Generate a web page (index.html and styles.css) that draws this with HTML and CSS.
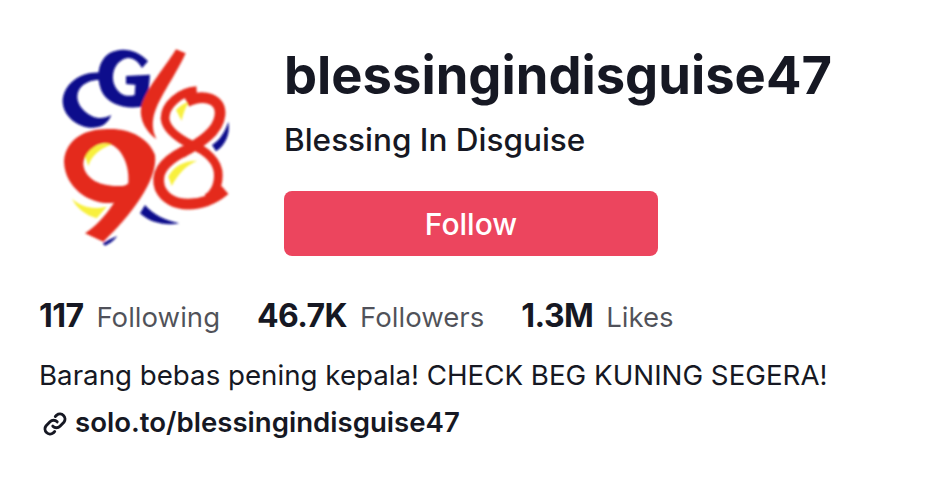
FILE: index.html
```html
<!DOCTYPE html>
<html lang="en">
<head>
  <meta charset="UTF-8" />
  <title>blessingindisguise47</title>
  <link rel="stylesheet" href="styles.css">
</head>
<body>
  <div class="profile">
    <div class="header">
      <svg class="avatar" viewBox="0 0 660 690" aria-label="CG 98 logo">
        <defs><filter id="soft"><feGaussianBlur stdDeviation="2.8"/></filter></defs>
        <g filter="url(#soft)">
          <path fill="#f8f03c" d="M132,370 C160,345 190,335 225,340 C185,352 155,375 145,408 Z"/>
          <path fill="#f8f03c" d="M95,505 C120,530 155,540 200,530 L170,565 C135,555 110,535 95,505 Z"/>
          <path fill="#f8f03c" d="M385,440 C400,410 430,392 472,392 C440,405 415,430 395,468 Z"/>
          <path fill="#f8f03c" d="M408,240 C420,228 430,220 447,216 C435,235 430,250 425,272 Z"/>
          <path fill="#0a0a8c" d="M565,275 C572,310 557,345 528,364 L516,345 C540,330 555,305 565,275 Z"/>
          <path fill="#0a0a8c" d="M315,525 C340,555 375,570 418,580 C375,588 330,578 300,550 Z"/>
          <path fill="#0a0a8c" d="M188,640 C200,632 215,625 232,618 C222,632 208,642 195,647 Z"/>
          <path fill="#0a0a8c" d="M185,128 C120,122 68,165 68,215 C70,265 125,300 170,292 C190,289 205,277 214,255 C195,265 175,268 155,258 C120,240 100,205 120,175 C135,155 160,148 185,150 Z"/>
          <path fill="#0a0a8c" d="M324,94 C295,60 245,48 208,70 C170,95 168,150 188,190 C210,228 268,242 322,226 L330,134 L258,138 L258,162 L286,164 L284,195 C252,205 228,185 220,155 C214,120 232,90 262,84 C280,82 295,95 306,114 Z"/>
          <path fill="#e42b1e" d="M408,58 L437,70 C400,150 350,210 340,265 C336,290 340,310 350,328 C320,308 298,270 303,235 C310,185 370,120 408,58 Z"/>
          <g fill="none" stroke="#e42b1e" stroke-linecap="butt">
            <path stroke-width="26" d="M470,182 C420,185 375,225 375,265 C378,300 415,325 455,345 C500,362 535,395 535,435 C535,470 520,495 500,505"/>
            <path stroke-width="32" d="M440,215 C490,190 545,205 540,255 C535,305 480,340 425,368"/>
            <path stroke-width="32" d="M432,364 C370,395 345,430 360,475 C390,540 490,535 555,480"/>
          </g>
          <path fill="#e42b1e" fill-rule="evenodd" d="M72,395 C75,340 120,300 190,298 C260,290 325,320 345,375 C355,450 270,560 190,635 L135,610 C165,590 195,560 222,518 C160,528 75,480 72,395 Z M130,405 C130,370 165,338 200,340 C240,345 270,400 265,460 C258,468 250,468 240,468 C170,470 135,440 130,405 Z"/>
        </g>
      </svg>
      <div class="info">
        <h1 class="username">blessingindisguise47</h1>
        <h2 class="nickname">Blessing In Disguise</h2>
        <button class="follow">Follow</button>
      </div>
    </div>
    <div class="stats">
      <div class="stat"><strong>117</strong><span>Following</span></div>
      <div class="stat"><strong>46.7K</strong><span>Followers</span></div>
      <div class="stat"><strong>1.3M</strong><span>Likes</span></div>
    </div>
    <p class="bio">Barang bebas pening kepala! CHECK BEG KUNING SEGERA!</p>
    <a class="link" href="#">
      <svg class="link-icon" viewBox="0 0 24 24" fill="none" stroke="currentColor" stroke-width="2.7" stroke-linecap="round" stroke-linejoin="round">
        <path d="M10 14a4.6 4.6 0 0 0 6.6 0l3.6-3.6a4.7 4.7 0 0 0-6.6-6.6l-1.3 1.3"/>
        <path d="M14 10a4.6 4.6 0 0 0-6.6 0l-3.6 3.6a4.7 4.7 0 0 0 6.6 6.6l1.3-1.3"/>
      </svg>
      solo.to/blessingindisguise47
    </a>
  </div>
</body>
</html>
```

FILE: styles.css
```css
body {
  margin: 0;
  background: #fff;
  color: #161823;
  font-family: Inter, 'Liberation Sans', sans-serif;
}

.profile {
  padding: 40px 0 0 39px;
}

.header {
  display: flex;
  align-items: flex-start;
}

.avatar {
  width: 220px;
  height: 230px;
  margin: -10px 24px 0 1px;
  flex-shrink: 0;
}

.info {
  display: flex;
  flex-direction: column;
  align-items: flex-start;
}

.username {
  margin: 0;
  font-size: 52.5px;
  line-height: 70px;
  font-weight: 700;
}

.nickname {
  margin: 11px 0 0;
  font-size: 31.5px;
  line-height: 38px;
  font-weight: 500;
}

.follow {
  width: 374px;
  height: 65px;
  margin-top: 32px;
  border: none;
  border-radius: 8px;
  background: #ec455e;
  color: #fff;
  font-family: inherit;
  font-size: 30px;
  font-weight: 500;
}

.stats {
  display: flex;
  gap: 37px;
  margin-top: 37px;
}

.stat {
  display: flex;
  align-items: baseline;
  gap: 13px;
  font-size: 27.6px;
  line-height: 38px;
}

.stat strong {
  font-size: 32px;
  font-weight: 700;
  letter-spacing: -0.6px;
}

.stat span {
  color: rgba(22, 24, 35, 0.75);
}

.bio {
  margin: 20px 0 0;
  font-size: 27.7px;
  line-height: 38px;
}

.link {
  display: flex;
  align-items: center;
  gap: 7px;
  margin-top: 9px;
  color: #161823;
  font-size: 27.6px;
  line-height: 38px;
  font-weight: 600;
  text-decoration: none;
}

.link-icon {
  width: 26px;
  height: 26px;
  margin: 4px 0 0 3px;
}
```
